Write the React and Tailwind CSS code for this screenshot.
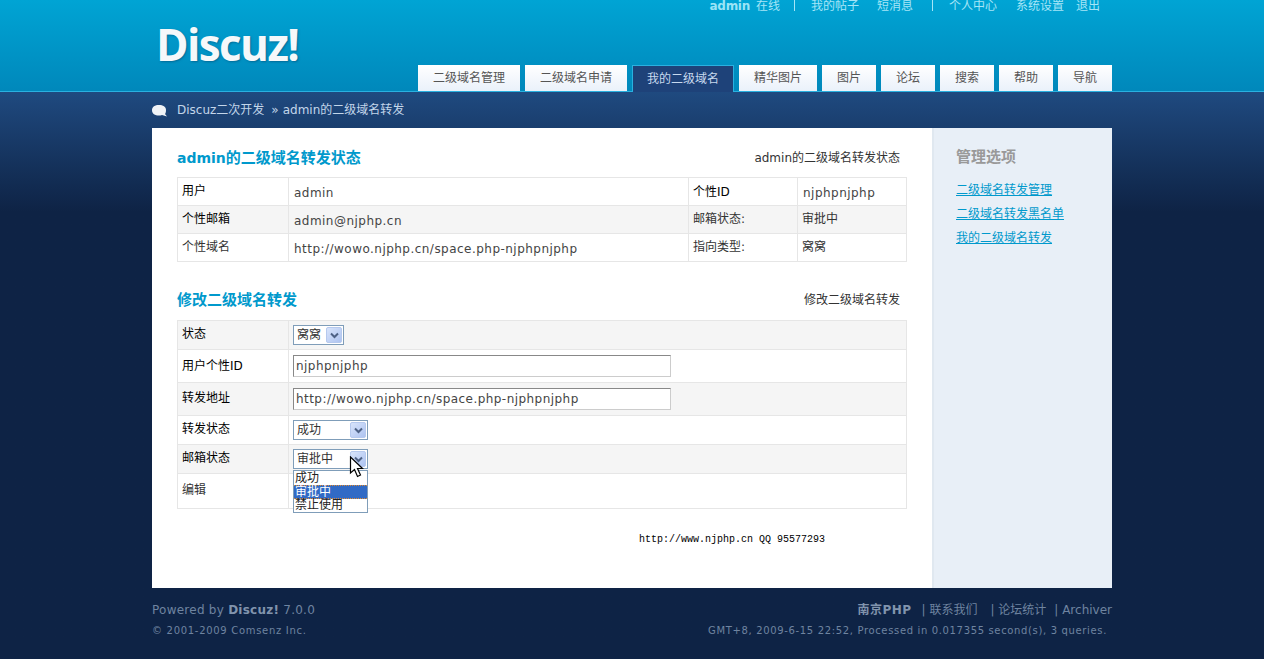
import React from 'react';

const FONT = 'font-["DejaVu_Sans","Noto_Sans_CJK_SC",sans-serif]';

const TABS = [
  { label: '二级域名管理', w: 'w-[102px]' },
  { label: '二级域名申请', w: 'w-[102px]' },
  { label: '我的二级域名', w: 'w-[102px]', active: true },
  { label: '精华图片', w: 'w-[78px]' },
  { label: '图片', w: 'w-[54px]' },
  { label: '论坛', w: 'w-[54px]' },
  { label: '搜索', w: 'w-[54px]' },
  { label: '帮助', w: 'w-[54px]' },
  { label: '导航', w: 'w-[54px]' },
];

// native-looking select box of the old XP theme
const SelectBox = ({ value, width }) => (
  <div className={`flex h-[20px] items-center justify-between border border-[#7f9db9] bg-white pl-[3px] pr-px text-[12px] text-[#333] ${width}`}>
    <span>{value}</span>
    <span className="flex h-[16px] w-[16px] items-center justify-center rounded-[2px] border border-[#b6c9ee] bg-gradient-to-br from-[#d8e4fb] to-[#aec3f0]">
      <svg width="9" height="7" viewBox="0 0 9 7">
        <path d="M1 1.5 L4.5 5 L8 1.5" fill="none" stroke="#4d6185" strokeWidth="2" />
      </svg>
    </span>
  </div>
);

const TextInput = ({ value }) => (
  <div className="flex h-[22px] w-[378px] items-center border border-t-[#888] border-l-[#888] border-r-[#ccc] border-b-[#ccc] bg-white pl-[2px] tracking-[0.45px] text-[12px] text-[#444]">
    {value}
  </div>
);

const SectionTitle = ({ children, right }) => (
  <div className="flex items-center justify-between">
    <h2 className="text-[15px] leading-[20px] font-bold text-[#0099cc]">{children}</h2>
    <span className="pr-[7px] text-[12px] text-[#333]">{right}</span>
  </div>
);

const Cell = ({ children, className = '' }) => (
  <td className={`border border-[#e6e6e6] align-middle text-[12px] ${className}`}>{children}</td>
);

// first column label, sits a little higher than the values
const Label = ({ children, className = 'text-black' }) => (
  <Cell className={`pb-[2px] pl-[4px] ${className}`}>{children}</Cell>
);

const Value = ({ children, className = 'text-[#444]' }) => (
  <Cell className={`pl-[5px] pt-[2px] tracking-[0.47px] ${className}`}>{children}</Cell>
);

const Cursor = () => (
  <svg className="absolute left-[349px] top-[456px]" width="15" height="22" viewBox="0 0 15 22">
    <path d="M1.5 1 L1.5 17 L5.5 13.5 L8.5 20.5 L11.5 19 L8.5 12.5 L13.5 12.5 Z" fill="#fff" stroke="#000" strokeWidth="1.2" />
  </svg>
);

export default function App() {
  return (
    <div className={`${FONT} relative h-[659px] w-[1264px] overflow-hidden bg-[#0e2345] text-[12px]`}>
      {/* header */}
      <div className="h-[92px] border-b border-[#2ab0e0] bg-gradient-to-b from-[#00a4d4] to-[#0088bb]">
        <div className="mx-auto w-[960px]">
          <div className="flex h-[11px] items-center justify-end pr-[12px] text-[12px] text-[#a5e5f7]">
            <b className="font-bold tracking-[-0.3px] text-[#9be4f6]">admin</b>
            <span className="ml-[6px]">在线</span>
            <span className="ml-[14px] h-[11px] w-px bg-[#a5e5f7]" />
            <span className="ml-[16px]">我的帖子</span>
            <span className="ml-[18px]">短消息</span>
            <span className="ml-[19px] h-[11px] w-px bg-[#a5e5f7]" />
            <span className="ml-[16px]">个人中心</span>
            <span className="ml-[19px]">系统设置</span>
            <span className="ml-[12px]">退出</span>
          </div>
          <div className="flex h-[80px]">
            <div className="ml-[4px] mt-[3px] font-['Open_Sans',sans-serif] text-[44px] leading-[60px] font-bold tracking-[-1.6px] text-[#f5f8fa] [text-shadow:1px_1px_2px_rgba(0,70,110,0.5)]">
              Discuz!
            </div>
            <div className="ml-auto flex items-end gap-[5px] self-end">
              {TABS.map((t) =>
                t.active ? (
                  <div key={t.label} className={`relative -mb-px flex h-[27px] items-center justify-center border-x border-t border-[#2ab0e0] bg-[#1e4279] text-[#c7d9ee] ${t.w}`}>
                    {t.label}
                  </div>
                ) : (
                  <div key={t.label} className={`flex h-[26px] items-center justify-center bg-gradient-to-b from-white to-[#eaf1fa] text-[#555] ${t.w}`}>
                    {t.label}
                  </div>
                )
              )}
            </div>
          </div>
        </div>
      </div>

      {/* breadcrumb + body on the blue gradient */}
      <div className="bg-gradient-to-b from-[#1f4a80] to-[#0e2345] to-[120px] pt-0">
        <div className="mx-auto w-[960px]">
          <div className="flex h-[36px] items-center text-[12px] text-[#c3d6ea]">
            <svg width="15" height="13" viewBox="0 0 15 13">
              <path d="M7 1 C11 1 14 2.8 14 6 C14 8 13.6 9.5 13 10 L15 12.5 L10 11 C9 11.4 8 11.5 7 11.5 C3 11.5 0 9.5 0 6.2 C0 2.8 3 1 7 1 Z" fill="#f0f3f7" />
            </svg>
            <span className="ml-[10px]">Discuz二次开发</span>
            <span className="ml-[7px]">»</span>
            <span className="ml-[4px]">admin的二级域名转发</span>
          </div>

          <div className="flex h-[460px]">
            {/* main panel */}
            <div className="w-[780px] bg-white pl-[25px] pr-[25px] pt-[20px]">
              <SectionTitle right="admin的二级域名转发状态">
                <span className="text-[14px]">admin</span>的二级域名转发状态
              </SectionTitle>
              <table className="mt-[9px] w-[729px] table-fixed border-collapse">
                <colgroup>
                  <col className="w-[111px]" />
                  <col className="w-[400px]" />
                  <col className="w-[109px]" />
                  <col className="w-[109px]" />
                </colgroup>
                <tbody>
                  <tr className="h-[28px]">
                    <Label>用户</Label>
                    <Value>admin</Value>
                    <Cell className="pl-[4px] text-black">个性ID</Cell>
                    <Value>njphpnjphp</Value>
                  </tr>
                  <tr className="h-[28px] bg-[#f5f5f5]">
                    <Label>个性邮箱</Label>
                    <Value>admin@njphp.cn</Value>
                    <Label className="text-[#333]">邮箱状态:</Label>
                    <Label className="text-[#333]">审批中</Label>
                  </tr>
                  <tr className="h-[28px]">
                    <Label className="text-[#333]">个性域名</Label>
                    <Value>http://wowo.njphp.cn/space.php-njphpnjphp</Value>
                    <Label className="text-[#333]">指向类型:</Label>
                    <Label className="text-[#333]">窝窝</Label>
                  </tr>
                </tbody>
              </table>

              <div className="mt-[28px]">
                <SectionTitle right="修改二级域名转发">修改二级域名转发</SectionTitle>
              </div>
              <table className="mt-[10px] w-[730px] table-fixed border-collapse text-black">
                <colgroup>
                  <col className="w-[111px]" />
                  <col />
                </colgroup>
                <tbody>
                  <tr className="h-[29px] bg-[#f5f5f5]">
                    <Label>状态</Label>
                    <Cell className="pl-[4px]"><SelectBox value="窝窝" width="w-[51px]" /></Cell>
                  </tr>
                  <tr className="h-[33px]">
                    <Cell className="pl-[4px]">用户个性ID</Cell>
                    <Cell className="pl-[4px]"><TextInput value="njphpnjphp" /></Cell>
                  </tr>
                  <tr className="h-[33px] bg-[#f5f5f5]">
                    <Label>转发地址</Label>
                    <Cell className="pl-[4px]"><TextInput value="http://wowo.njphp.cn/space.php-njphpnjphp" /></Cell>
                  </tr>
                  <tr className="h-[29px]">
                    <Label>转发状态</Label>
                    <Cell className="pl-[4px]"><SelectBox value="成功" width="w-[75px]" /></Cell>
                  </tr>
                  <tr className="h-[29px] bg-[#f5f5f5]">
                    <Label>邮箱状态</Label>
                    <Cell className="pl-[4px]"><SelectBox value="审批中" width="w-[75px]" /></Cell>
                  </tr>
                  <tr className="h-[35px]">
                    <Label className="text-[#333]">编辑</Label>
                    <Cell />
                  </tr>
                </tbody>
              </table>

              <div className="mt-[24px] pl-[462px] font-['Liberation_Mono','Noto_Sans_CJK_SC',monospace] text-[10px] leading-[14px] text-black">
                http://www.njphp.cn QQ 95577293
              </div>
            </div>

            {/* side panel */}
            <div className="w-[180px] border-l-2 border-[#e0e8f0] bg-[#e8eff7] pl-[22px] pt-[20px]">
              <h3 className="text-[15px] leading-[18px] font-bold text-[#999]">管理选项</h3>
              <ul className="mt-[14px] flex flex-col gap-[4px] text-[12px] leading-[20px] text-[#0099cc]">
                <li className="underline">二级域名转发管理</li>
                <li className="underline">二级域名转发黑名单</li>
                <li className="underline">我的二级域名转发</li>
              </ul>
            </div>
          </div>

          {/* footer */}
          <div className="flex justify-between pt-[13px] text-[#6f84a0]">
            <div>
              <p className="text-[12px] leading-[19px] tracking-[0.25px]">
                Powered by <b className="font-bold text-[#8194ad]">Discuz!</b> 7.0.0
              </p>
              <p className="mt-[4px] text-[10px] leading-[14px] tracking-[0.7px]">© 2001-2009 Comsenz Inc.</p>
            </div>
            <div className="text-right">
              <p className="text-[12px] leading-[18px]">
                <b className="font-bold tracking-[0.5px] text-[#8194ad]">南京PHP</b>
                <span className="ml-[10px]">|</span> 联系我们
                <span className="ml-[13px]">|</span> 论坛统计
                <span className="ml-[8px]">|</span> Archiver
              </p>
              <p className="mt-[5px] pr-[5px] text-[10px] leading-[14px] tracking-[0.65px]">
                GMT+8, 2009-6-15 22:52, Processed in 0.017355 second(s), 3 queries.
              </p>
            </div>
          </div>
        </div>
      </div>

      {/* open dropdown of the mail status select */}
      <div className="absolute left-[293px] top-[470px] flex w-[75px] flex-col border border-[#7f9db9] bg-white text-[12px] leading-[14px] text-[#222]">
        <span className="pl-px">成功</span>
        <span className="h-[14px] border-y border-dotted border-[#e08a30] bg-[#316ac5] pl-px leading-[12px] text-white">审批中</span>
        <span className="h-[13px] pl-px leading-[13px]">禁止使用</span>
      </div>
      <Cursor />
    </div>
  );
}
